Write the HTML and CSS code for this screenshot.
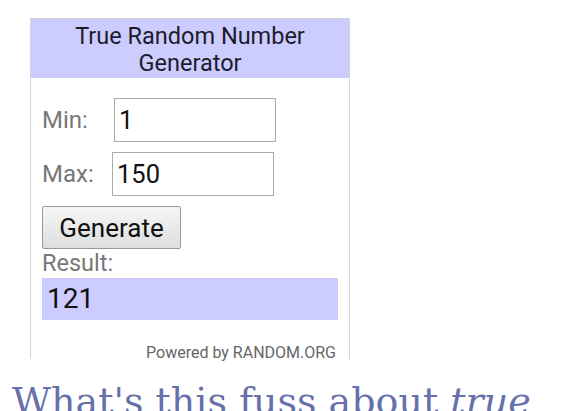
FILE: index.html
```html
<!DOCTYPE html>
<html lang="en">
<head>
    <meta charset="UTF-8">
    <title>True Random Number Generator</title>
    <link rel="stylesheet" href="styles.css">
</head>
<body>

    <div class="widget">
        <div class="widget-title">True Random Number<br>Generator</div>
        <div class="widget-body">
            <div class="row">
                <label for="min">Min:</label>
                <input type="text" id="min" class="min-input" value="1">
            </div>
            <div class="row">
                <label for="max">Max:</label>
                <input type="text" id="max" class="max-input" value="150">
            </div>
            <button class="generate">Generate</button>
            <div class="result-label">Result:</div>
            <div class="result">121</div>
            <div class="powered">Powered by RANDOM.ORG</div>
        </div>
    </div>

    <h2 class="fuss">What's this fuss about <em>true</em></h2>

</body>
</html>
```

FILE: styles.css
```css
* {
    margin: 0;
    padding: 0;
    box-sizing: border-box;
}

body {
    font-family: 'Roboto', sans-serif;
    background-color: #fff;
    padding: 18px 0 0 30px;
    overflow: hidden;
    height: 411px;
}

.widget {
    width: 320px;
    height: 341px;
    border: 1px solid #d4d4d8;
    border-bottom: none;
}

.widget-title {
    background-color: #ccccff;
    text-align: center;
    font-size: 23.5px;
    line-height: 27px;
    color: #1c1c2c;
    padding: 4px 0 1px;
}

.widget-body {
    padding: 20px 10px 0 11px;
}

.row {
    display: flex;
    align-items: center;
    margin-bottom: 10px;
}

label {
    font-size: 24px;
    color: #777;
    width: 72px;
}

.row:nth-child(2) label {
    width: 70px;
}

input[type="text"] {
    width: 162px;
    height: 44px;
    border: 1px solid #aaa;
    font-family: 'Roboto', sans-serif;
    font-size: 25.5px;
    color: #111;
    padding: 0 4px;
    outline: none;
}

.generate {
    display: block;
    width: 139px;
    height: 43px;
    font-family: 'Roboto', sans-serif;
    font-size: 26px;
    color: #111;
    border: 1px solid #999;
    border-radius: 2px;
    background: linear-gradient(#f6f6f6, #dedede);
}

.result-label {
    font-size: 23.5px;
    color: #777;
    line-height: 29px;
}

.result {
    background-color: #ccccff;
    width: 296px;
    height: 42px;
    font-size: 28px;
    line-height: 42px;
    color: #111;
    padding-left: 5px;
}

.powered {
    text-align: right;
    font-size: 16px;
    color: #666;
    margin-top: 23px;
    padding-right: 3px;
}

.fuss {
    font-family: 'DejaVu Serif', 'Liberation Serif', serif;
    font-weight: normal;
    font-size: 38px;
    color: #6670aa;
    margin: 20px 0 0 -18px;
    white-space: nowrap;
}
```
